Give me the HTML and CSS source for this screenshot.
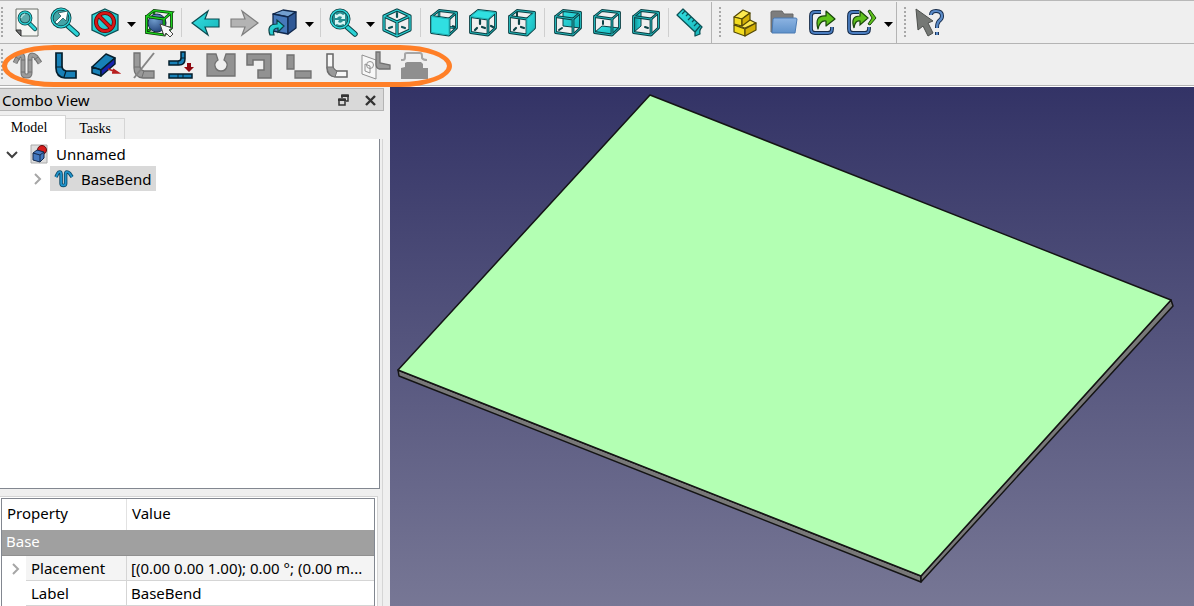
FILE: index.html
```html
<!DOCTYPE html>
<html lang="en">
<head>
    <meta charset="UTF-8">
    <meta name="viewport" content="width=device-width, initial-scale=1.0">
    <title>BaseBend</title>
    <link rel="stylesheet" href="styles.css">
</head>
<body>
    <!-- shared icon parts -->
    <svg class="defs" width="0" height="0" aria-hidden="true">
        <defs>
            <linearGradient id="cyan" x1="0" y1="0" x2="1" y2="1">
                <stop offset="0" stop-color="#34e0e2"/><stop offset="1" stop-color="#16b5ba"/>
            </linearGradient>
            <linearGradient id="shade" x1="0" y1="0" x2="1" y2="0">
                <stop offset="0" stop-color="#06898c"/><stop offset="1" stop-color="#2bd8dc"/>
            </linearGradient>
            <linearGradient id="folder" x1="0" y1="0" x2="0" y2="1">
                <stop offset="0" stop-color="#8db4e2"/><stop offset="1" stop-color="#5f92cb"/>
            </linearGradient>
            <radialGradient id="ball" cx=".35" cy=".3" r=".8">
                <stop offset="0" stop-color="#729fcf"/><stop offset="1" stop-color="#1d3c73"/>
            </radialGradient>
            <path id="front-edges" d="M4.500 10.500 22 13V29L4.500 26.500Z"/>
            <path id="top-edges" d="M4.500 10.500 12 4.500 29.500 6.500 22 13"/>
            <path id="right-edges" d="M29.500 6.500V22L22 29"/>
            <path id="back-edges" d="M12 4.500V20M12 20 4.500 26.500M12 20 29.500 22"/>
            <g id="cube-wire" stroke-linejoin="round">
                <g stroke="#0a4145" stroke-width="2.800"><use href="#front-edges"/><use href="#top-edges"/><use href="#right-edges"/></g>
                <g stroke="#22b4b7" stroke-width="1"><use href="#front-edges"/><use href="#top-edges"/><use href="#right-edges"/></g>
            </g>
            <g id="cube-back">
                <use href="#back-edges" stroke="#0a4145" stroke-width="2.600"/>
                <use href="#back-edges" stroke="#22b4b7" stroke-width="1"/>
            </g>
            <g id="axis-marks" stroke="#0a4145" stroke-width="2.200" stroke-linecap="round">
                <path d="M14 14V18M9 24 11 22M16 21 19 22M25 20 27 21"/>
            </g>
            <path id="hooks" d="M5 15 8 9Q9 7 11 7Q13 7 13 11V25Q13 28 16.500 28Q20 28 20 25V11Q20 7 22 7Q24 7 26 9L30 15"/>
            <path id="drop" d="M0 0H9L4.500 5Z"/>
            <path id="iso" d="M16 4 29 10V24L16 30 3 24V10ZM3 10 16 16 29 10M16 16V30"/>
            <path id="link-box" d="M15 6H9Q5 6 5 10V23Q5 27 9 27H22Q26 27 26 23V21"/>
            <path id="sub-box" d="M14 6H8Q4 6 4 10V23Q4 27 8 27H20Q24 27 24 23V21"/>
            <path id="query" d="M18 9Q18 5 23 5Q29 5 29 10Q29 13 26 15Q24 17 24 22M24 26V29"/>
        </defs>
    </svg>

    <header class="toolbars">
        <div class="toolbar-row">
            <div class="toolbar first" role="toolbar" aria-label="View">
                <span class="handle"></span>
                <button aria-label="Fit all">
                    <svg viewBox="0 0 33 33"><path d="M6 3H28V30H11L6 25Z" fill="#f4f5f2" stroke="#6d706b"/><path d="M6 24H11V30Z" fill="#77797a" stroke="#333"/><path d="M19 17 25 23" stroke="#0a4145" stroke-width="4.500" stroke-linecap="round"/><path d="M19 17 25 23" stroke="#2bd3d6" stroke-width="2.800" stroke-linecap="round"/><circle cx="15" cy="12" r="6" fill="#5cabac" stroke="#0a4145" stroke-width="2.800"/><circle cx="15" cy="12" r="6" stroke="#2bd3d6" stroke-width="1.300"/><path d="M11 12Q12 9 15 8" stroke="#a9dcdc" stroke-width="1.500"/></svg>
                </button>
                <button aria-label="Fit selection">
                    <svg viewBox="0 0 33 33"><path d="M19 20 28 28" stroke="#0a4145" stroke-width="5.500" stroke-linecap="round"/><path d="M19 20 28 28" stroke="#2bd3d6" stroke-width="3.500" stroke-linecap="round"/><circle cx="12" cy="12" r="9" fill="#43a4a6" stroke="#0a4145" stroke-width="3"/><circle cx="12" cy="12" r="9" stroke="#2bd3d6" stroke-width="1.400"/><path d="M6 16 12 10 9 7 19 5 17 15 14 12 8 18Z" fill="#fff" stroke="#174b50" stroke-width=".7"/></svg>
                </button>
                <button aria-label="Draw style">
                    <svg viewBox="0 0 33 33"><path d="M17 3 30 9V24L17 30 4 24V9Z" fill="url(#cyan)" stroke="#0a5256" stroke-width="1.300"/><circle cx="17" cy="16" r="9" stroke="#5c0909" stroke-width="4"/><path d="M11 10 23 22" stroke="#5c0909" stroke-width="4"/><circle cx="17" cy="16" r="9" stroke="#d91616" stroke-width="2.500"/><path d="M11 10 23 22" stroke="#d91616" stroke-width="2.500"/></svg>
                </button>
                <button class="menu" aria-label="Draw style menu"><svg viewBox="0 0 9 5"><use href="#drop"/></svg></button>
                <button aria-label="Bounding box">
                    <svg viewBox="0 0 33 33"><use href="#back-edges" stroke="#073907" stroke-width="2.600"/><use href="#back-edges" stroke="#13b413" stroke-width="1.200"/><circle cx="15" cy="17" r="9" fill="url(#ball)" stroke="#152b50"/><g stroke="#073907" stroke-width="2.800"><use href="#front-edges"/><use href="#top-edges"/><use href="#right-edges"/></g><g stroke="#1ed31e" stroke-width="1.300"><use href="#front-edges"/><use href="#top-edges"/><use href="#right-edges"/></g><path d="M18 18 30 22 27 24 31 28 28 31 24 27 22 30Z" fill="#f7f7f7" stroke="#444"/></svg>
                </button>
                <span class="separator"></span>
                <button aria-label="Back">
                    <svg viewBox="0 0 33 33"><path d="M4 17 20 5 17 13H31V21H17L20 29Z" fill="url(#cyan)" stroke="#0a4b50" stroke-width="1.200"/></svg>
                </button>
                <button aria-label="Forward" disabled>
                    <svg viewBox="0 0 33 33"><path d="M31 17 15 5 18 13H4V21H18L15 29Z" fill="#b3b3b3" stroke="#7e7e7e" stroke-width="1.200"/></svg>
                </button>
                <button aria-label="Go to linked object">
                    <svg viewBox="0 0 33 33"><g stroke="#10284c" stroke-width="1.300" stroke-linejoin="round"><path d="M7 8 17 4 30 6 22 11Z" fill="#729fcf"/><path d="M7 8 22 11V28L7 25Z" fill="#4679bb"/><path d="M22 11 30 6V22L22 28Z" fill="#2f5896"/></g><path d="M4 29Q0 18 11 18V14L18 20 12 26V22Q6 22 8 29Z" fill="url(#cyan)" stroke="#0a4145" stroke-width="1.200"/></svg>
                </button>
                <button class="menu" aria-label="Link menu"><svg viewBox="0 0 9 5"><use href="#drop"/></svg></button>
                <span class="separator"></span>
                <button aria-label="Sync view">
                    <svg viewBox="0 0 33 33"><path d="M20 21 28 28" stroke="#0a4145" stroke-width="5.500" stroke-linecap="round"/><path d="M20 21 28 28" stroke="#2bd3d6" stroke-width="3.500" stroke-linecap="round"/><circle cx="13" cy="13" r="9" fill="#2a8f92" stroke="#0a4145" stroke-width="3"/><circle cx="13" cy="13" r="9" stroke="#2bd3d6" stroke-width="1.500"/><path d="M8 12V8L10 9Q13 6 16 9L18 8V13H14L15 11Q12 9 10 12ZM18 15V19L16 18Q13 20 10 18L8 19V14H12L11 16Q14 18 16 15Z" fill="#d8f5f4"/></svg>
                </button>
                <button class="menu" aria-label="Sync menu"><svg viewBox="0 0 9 5"><use href="#drop"/></svg></button>
                <button aria-label="Isometric">
                    <svg viewBox="0 0 33 33" stroke-linejoin="round"><use href="#iso" stroke="#0a4145" stroke-width="3.200"/><use href="#iso" stroke="#2bd3d6" stroke-width="1.300"/><path d="M16 7V11M8 22 11 21M21 21 24 22" stroke="#0a5256" stroke-width="2.200" stroke-linecap="round"/></svg>
                </button>
                <span class="separator"></span>
                <button aria-label="Front">
                    <svg viewBox="0 0 33 33"><use href="#cube-back"/><use href="#cube-wire"/><path d="M4.500 10.500 22 13V29L4.500 26.500Z" fill="#30dfe1" stroke="#22b4b7"/><path d="M25 20 28 21" stroke="#0a4145" stroke-width="2"/></svg>
                </button>
                <button aria-label="Top">
                    <svg viewBox="0 0 33 33"><use href="#axis-marks"/><use href="#cube-wire"/><path d="M4.500 10.500 12 4.500 29.500 6.500 22 13Z" fill="#30dfe1" stroke="#22b4b7"/></svg>
                </button>
                <button aria-label="Right">
                    <svg viewBox="0 0 33 33"><use href="#axis-marks"/><path d="M12 5V12" stroke="#0a4145" stroke-width="2"/><use href="#cube-wire"/><path d="M22 13 29.500 6.500V22L22 29Z" fill="url(#cyan)" stroke="#22b4b7"/></svg>
                </button>
                <span class="separator"></span>
                <button aria-label="Rear">
                    <svg viewBox="0 0 33 33"><path d="M12 4.500 29.500 6.500V22L12 20Z" fill="url(#cyan)" stroke="#0a4145"/><path d="M8 24 11 22" stroke="#0a4145" stroke-width="2" stroke-linecap="round"/><use href="#cube-wire"/></svg>
                </button>
                <button aria-label="Bottom">
                    <svg viewBox="0 0 33 33"><path d="M4.500 26.500 12 20 29.500 22 22 29Z" fill="url(#cyan)" stroke="#0a4145"/><path d="M13 15V18" stroke="#0a4145" stroke-width="2" stroke-linecap="round"/><use href="#cube-wire"/></svg>
                </button>
                <button aria-label="Left">
                    <svg viewBox="0 0 33 33"><path d="M4.500 10.500 12 4.500V20L4.500 26.500Z" fill="url(#shade)" stroke="#0a4145"/><path d="M16 21 19 22" stroke="#0a4145" stroke-width="2" stroke-linecap="round"/><use href="#cube-wire"/></svg>
                </button>
                <span class="separator"></span>
                <button aria-label="Measure distance">
                    <svg viewBox="0 0 33 33"><path d="M2 9 8 3 27 21Q24 24 25 28L20 30 20 26Z" fill="url(#cyan)" stroke="#0a5256" stroke-width="1.300" stroke-linejoin="round"/><path d="M10 5 7 8M13 8 11 10M16 11 13 14M19 14 17 16M22 17 19 20M25 20 20 26" stroke="#0a5256" stroke-width="1.200"/></svg>
                </button>
            </div>
            <div class="toolbar" role="toolbar" aria-label="Structure">
                <span class="handle"></span>
                <button aria-label="Create part">
                    <svg viewBox="0 0 33 33"><g stroke="#534806" stroke-width="1.200" stroke-linejoin="round"><path d="M6 19 20 13 28 17 17 22Z" fill="#fce94f"/><path d="M6 19 17 23V30L6 26Z" fill="#f2dc20"/><path d="M17 23 28 17V24L17 30Z" fill="#d3b008"/><path d="M6 11 15 4 22 7 14 13Z" fill="#fce94f"/><path d="M6 11 14 13V20L6 18Z" fill="#f2dc20"/><path d="M14 13 22 7V14L14 20Z" fill="#d3b008"/></g></svg>
                </button>
                <button aria-label="Create group">
                    <svg viewBox="0 0 33 33"><path d="M4 6Q4 5 6 5H15L17 8H26V26H4Z" fill="#7d7d7d" stroke="#696969"/><path d="M7 12H28Q30 12 30 13L28 27H5L6 13Z" fill="url(#folder)" stroke="#4a7ab3"/></svg>
                </button>
                <button aria-label="Make link">
                    <svg viewBox="0 0 33 33"><use href="#link-box" stroke="#142a49" stroke-width="3.800"/><use href="#link-box" stroke="#4a7dc0" stroke-width="1.800"/><path d="M12 23Q8 9 20 10V5L29 13 20 20V15Q14 14 12 23Z" fill="#5fc21c" stroke="#18470a" stroke-width="1.200" stroke-linejoin="round"/></svg>
                </button>
                <button aria-label="Make sub-link">
                    <svg viewBox="0 0 33 33"><use href="#sub-box" stroke="#142a49" stroke-width="3.800"/><use href="#sub-box" stroke="#4a7dc0" stroke-width="1.800"/><path d="M9 22Q5 10 15 10V5L23 12 15 19V15Q10 14 9 22Z" fill="#5fc21c" stroke="#18470a" stroke-width="1.200"/><path d="M23 5 25 4 31 12 25 19 23 18 27 12Z" fill="#5fc21c" stroke="#18470a"/></svg>
                </button>
                <button class="menu" aria-label="Link options"><svg viewBox="0 0 9 5"><use href="#drop"/></svg></button>
            </div>
            <div class="toolbar last" role="toolbar" aria-label="Help">
                <span class="handle"></span>
                <button aria-label="What's this?">
                    <svg viewBox="0 0 33 33"><path d="M3 3 20 15 15 17 20 27 15 30 10 20 5 24Z" fill="#757875" stroke="#4d504d"/><use href="#query" stroke="#142a49" stroke-width="4"/><use href="#query" stroke="#5c8cc9" stroke-width="2.200"/></svg>
                </button>
            </div>
        </div>

        <div class="toolbar-row sheet-row">
            <div class="toolbar first" role="toolbar" aria-label="Sheet metal">
                <span class="handle"></span>
                <button aria-label="Make base wall" disabled>
                    <svg viewBox="0 0 33 33"><use href="#hooks" stroke="#717171" stroke-width="5"/><use href="#hooks" stroke="#9b9b9b" stroke-width="3"/><path d="M6 9 10 12M11 12H15M18 12H22M11 24H15M18 24H22M24 12 28 9" stroke="#717171"/></svg>
                </button>
                <button aria-label="Make wall">
                    <svg viewBox="0 0 33 33"><path d="M7 5H13V18Q13 22 17 23H27V30H16Q7 29 7 20Z" fill="#1780b7" stroke="#041e2c" stroke-width="1.700"/><path d="M7 19H13M17 23 15 29" stroke="#041e2c" stroke-width="1.200"/></svg>
                </button>
                <button aria-label="Extend face">
                    <svg viewBox="0 0 33 33"><g stroke="#041e2c" stroke-width="1.500" stroke-linejoin="round"><path d="M4 19 18 6 27 10 13 22Z" fill="#1780b7"/><path d="M4 19 13 22V28L4 25Z" fill="#1780b7"/><path d="M13 22 27 10V16L13 28Z" fill="#1722ae"/></g><path d="M20 21 31 25M25 21 31 25 24 25" stroke="#b91f1f" stroke-width="1.500" fill="#b91f1f"/></svg>
                </button>
                <button aria-label="Fold wall" disabled>
                    <svg viewBox="0 0 33 33"><path d="M7 5H13V18Q13 22 17 23H27V30H16Q7 29 7 20Z" fill="#999" stroke="#717171" stroke-width="1.300"/><path d="M7 19H13M17 23 15 29" stroke="#717171"/><path d="M27 5 7 30" stroke="#858585" stroke-width="2"/></svg>
                </button>
                <button aria-label="Unfold">
                    <svg viewBox="0 0 33 33"><path d="M15 4H19V11Q19 17 13 17H3V13H12Q15 13 15 10ZM3 26H26V30H3Z" fill="#1780b7" stroke="#041e2c" stroke-width="1.500"/><path d="M12 13V17M15 10H19M12 26V30M17 26V30" stroke="#041e2c"/><path d="M21 15H25V19H28L23 24 18 19H21Z" fill="#8f0710"/></svg>
                </button>
                <button aria-label="Corner relief" disabled>
                    <svg viewBox="0 0 33 33"><path d="M2 6H11L13 12Q9 15 10 18Q11 23 16 23Q21 23 22 18Q23 15 19 12L21 6H30V28H2Z" fill="#929292" stroke="#717171" stroke-width="1.300"/></svg>
                </button>
                <button aria-label="Make relief" disabled>
                    <svg viewBox="0 0 33 33"><path d="M3 6H27V30H14V22H20V12H9V17H3Z" fill="#929292" stroke="#717171" stroke-width="1.500"/></svg>
                </button>
                <button aria-label="Make junction" disabled>
                    <svg viewBox="0 0 33 33"><path d="M4 7H11V21H4ZM12 23H28V30H12Z" fill="#929292" stroke="#717171" stroke-width="1.300"/></svg>
                </button>
                <button aria-label="Make bend" disabled>
                    <svg viewBox="0 0 33 33"><path d="M5 6H11V18Q11 22 15 23H25V29H14Q5 28 5 20Z" fill="#f7f7f7" stroke="#666" stroke-width="1.500"/><path d="M5 19H11Q12 22 15 23L13 29Q6 28 5 19Z" fill="#999" stroke="#717171"/></svg>
                </button>
                <button aria-label="Sketch on sheet" disabled>
                    <svg viewBox="0 0 33 33"><path d="M1 7 15 12V31L1 26Z" fill="#f8f8f8" stroke="#909090"/><path d="M4 16 9 18V25L4 23Z" stroke="#929292"/><circle cx="9" cy="17" r="3.500" stroke="#929292"/><path d="M15 4H19V15L29 17V21H18Q15 20 15 16Z" fill="#999" stroke="#717171" stroke-width="1.300"/></svg>
                </button>
                <button aria-label="Forming" disabled>
                    <svg viewBox="0 0 33 33"><path d="M1 12H3Q5 12 5 9V6Q5 5 7 5H20Q22 5 22 8V10Q23 12 27 12" stroke="#a6a6a6" stroke-width="2"/><path d="M1 31V20L5 19V15L7 14H21L23 16V20H28V31Z" fill="#8f8f8f"/></svg>
                </button>
            </div>
            <span class="highlight"></span>
        </div>
    </header>

    <main class="workspace">
        <aside class="combo">
            <div class="dock-title">
                <h1>Combo View</h1>
                <button aria-label="Float"><svg viewBox="0 0 11 12"><path d="M4 4V1H10V7H8M1 5H7V11H1Z" stroke="#333" stroke-width="1.500"/><path d="M3 2H11M0 6H8" stroke="#333" stroke-width="2"/></svg></button>
                <button aria-label="Close"><svg viewBox="0 0 11 12"><path d="M1 2 10 11M10 2 1 11" stroke="#333" stroke-width="2.400"/></svg></button>
            </div>
            <div class="tabs" role="tablist">
                <button class="tab active" role="tab" aria-selected="true">Model</button>
                <button class="tab" role="tab" aria-selected="false">Tasks</button>
            </div>
            <div class="pane">
                <ul class="tree">
                    <li>
                        <div class="node">
                            <svg class="chevron open" viewBox="0 0 12 12"><path d="M1 4 6 9 11 4"/></svg>
                            <svg class="doc-icon" viewBox="0 0 18 20"><path d="M1 1H17V19H1Z" fill="#dedede" stroke="#aaa"/><circle cx="12" cy="6" r="4.500" fill="#d61c1c" stroke="#641010"/><path d="M3 9 7 6 14 8V14L10 18 3 16Z" fill="#4479c0" stroke="#13284b"/><path d="M3 9 10 11 14 8M10 11V18" stroke="#13284b"/></svg>
                            <span class="name doc-name">Unnamed</span>
                        </div>
                        <ul>
                            <li>
                                <div class="node child">
                                    <svg class="chevron" viewBox="0 0 12 12"><path d="M4 1 9 6 4 11"/></svg>
                                    <span class="name selected">
                                        <svg viewBox="2 3 31 30"><use href="#hooks" stroke="#0b4866" stroke-width="5.500"/><use href="#hooks" stroke="#2094cc" stroke-width="2.800"/></svg>
                                        BaseBend
                                    </span>
                                </div>
                            </li>
                        </ul>
                    </li>
                </ul>
                <div class="properties">
                    <table>
                        <colgroup>
                            <col class="col-expander">
                            <col class="col-key">
                            <col>
                        </colgroup>
                        <thead>
                            <tr><th class="key" colspan="2">Property</th><th>Value</th></tr>
                        </thead>
                        <tbody>
                            <tr class="group"><th colspan="3">Base</th></tr>
                            <tr class="shaded">
                                <td class="expander"><svg class="chevron" viewBox="0 0 12 12"><path d="M4 1 9 6 4 11"/></svg></td>
                                <td class="key">Placement</td>
                                <td class="value">[(0.00 0.00 1.00); 0.00 °; (0.00 m...</td>
                            </tr>
                            <tr>
                                <td class="expander"></td>
                                <td class="key">Label</td>
                                <td class="value">BaseBend</td>
                            </tr>
                        </tbody>
                    </table>
                </div>
            </div>
        </aside>
        <section class="view" aria-label="3D view">
            <svg viewBox="0 0 804 519" preserveAspectRatio="xMinYMin meet">
                <g stroke="#141414" stroke-width="1.500" stroke-linejoin="round">
                    <path d="M8 283 531 489V495L9 289Z" fill="#787878"/>
                    <path d="M531 489 781 213 783 219 531 495Z" fill="#787878"/>
                    <path d="M260 8 781 213 531 489 8 283Z" fill="#b3ffb3"/>
                </g>
            </svg>
        </section>
    </main>
</body>
</html>
```
FILE: styles.css
```css
* {
    box-sizing: border-box;
}
body {
    margin: 0;
    height: 100vh;
    display: flex;
    flex-direction: column;
    overflow: hidden;
    background: #efefef;
    color: #000;
    font-family: "Noto Sans", "Open Sans", sans-serif;
    font-size: 15px;
}
button {
    display: flex;
    align-items: center;
    justify-content: center;
    flex: none;
    padding: 0;
    border: none;
    background: none;
    color: inherit;
    font: inherit;
}
svg {
    display: block;
    fill: none;
}
.defs {
    position: absolute;
}
ul {
    list-style: none;
    margin: 0;
    padding: 0;
}

/* toolbars */
.toolbars {
    border-top: 1px solid #b8b8b8;
    border-bottom: 1px solid #fff;
}
.toolbar-row {
    display: flex;
    height: 43px;
    padding-top: 1px;
    border-bottom: 1px solid #b4b4b4;
}
.sheet-row {
    position: relative;
    height: 42px;
    padding-top: 0;
}
.toolbar {
    display: flex;
    padding-left: 5px;
    border-right: 1px solid #b4b4b4;
    margin-right: 1px;
}
.toolbar.first {
    padding-left: 0;
}
.toolbar.last,
.sheet-row .toolbar {
    border-right: none;
}
.toolbar button {
    width: 39px;
}
.toolbar button svg {
    width: 33px;
    height: 33px;
}
.toolbar .menu {
    width: 15px;
}
.toolbar .menu svg {
    width: 9px;
    height: 5px;
    fill: #000;
    margin-top: 3px;
}
.handle {
    width: 7px;
    margin: 4px 0;
    background: radial-gradient(circle at 2px 2px, #a8a8a8 1px, transparent 1px) 0 0 / 7px 4px;
}
.separator {
    width: 7px;
    margin: 6px 0;
    background: linear-gradient(#cfcfcf, #cfcfcf) 3px 0 / 1px 100% no-repeat;
}
.highlight {
    position: absolute;
    top: 1px;
    left: 2px;
    width: 450px;
    height: 42px;
    border: 5px solid #ff7f27;
    border-radius: 52px / 21px;
    pointer-events: none;
    z-index: 1;
}

/* combo view */
.workspace {
    flex: 1;
    min-height: 0;
    display: grid;
    grid-template-columns: 390px 1fr;
}
.combo {
    display: flex;
    flex-direction: column;
    min-height: 0;
    padding: 1px 6px 0 0;
}
.dock-title {
    display: flex;
    align-items: center;
    height: 23px;
    padding: 0 6px 0 2px;
    border: 1px solid #b4b4b4;
    border-left: none;
    background: #d9d9d9;
}
.dock-title h1 {
    flex: 1;
    margin: 0;
    font-size: 15px;
    font-weight: normal;
}
.dock-title button {
    width: 14px;
    margin-left: 13px;
}
.dock-title svg {
    width: 11px;
    height: 12px;
}
.tabs {
    display: flex;
    align-items: flex-end;
    margin-top: 4px;
    height: 24px;
    font-family: "Liberation Serif", serif;
    font-size: 14px;
}
.tab {
    width: 59px;
    height: 21px;
    border: 1px solid #d5d5d5;
    border-left: none;
    border-bottom: none;
}
.tab.active {
    width: 66px;
    height: 24px;
    padding-right: 7px;
    background: #fff;
}
.pane {
    flex: 1;
    min-height: 0;
    display: flex;
    flex-direction: column;
    margin-right: 1px;
    border-right: 1px solid #d5d5d5;
}
.tree {
    flex: 1;
    margin-right: 2px;
    padding-top: 2px;
    background: #fff;
    border-right: 1px solid #828790;
    border-bottom: 1px solid #828790;
}
.node {
    display: flex;
    align-items: center;
    height: 25px;
    padding-left: 6px;
}
.node.child {
    padding-left: 31px;
}
.chevron {
    width: 12px;
    height: 12px;
    stroke: #a6a6a6;
    stroke-width: 2;
}
.chevron.open {
    stroke: #404040;
}
.doc-icon {
    width: 18px;
    height: 20px;
    margin-left: 12px;
}
.name {
    display: flex;
    align-items: center;
    height: 25px;
}
.doc-name {
    margin-left: 8px;
}
.selected {
    gap: 7px;
    margin-left: 7px;
    padding: 0 4px;
    background: #d9d9d9;
}
.selected svg {
    width: 20px;
    height: 20px;
}

/* property editor */
.properties {
    margin: 7px 4px 0 0;
    padding: 1px 2px 0 1px;
    background: #fff;
    border-top: 1px solid #d5d5d5;
    border-right: 1px solid #d5d5d5;
}
table {
    width: 100%;
    border: 1px solid #828790;
    border-bottom: none;
    border-collapse: separate;
    border-spacing: 0;
    table-layout: fixed;
}
.col-expander {
    width: 24px;
}
.col-key {
    width: 101px;
}
th,
td {
    height: 25px;
    padding: 0 0 0 5px;
    border-bottom: 1px solid #d5d5d5;
    font-weight: normal;
    text-align: left;
    white-space: nowrap;
    line-height: 20px;
}
th {
    padding-bottom: 3px;
}
thead th {
    height: 31px;
    border-bottom: none;
}
th.key {
    border-right: 1px solid #e2e2e2;
}
td.key {
    border-right: 1px solid #d5d5d5;
}
td.value {
    padding-left: 4px;
}
.group th {
    height: 26px;
    padding-left: 4px;
    background: #a0a0a0;
    border-bottom-color: #909090;
    color: #fff;
}
.shaded td {
    background: #f4f4f4;
}
td.expander {
    padding-left: 7px;
    background: #fff;
    border-bottom: none;
}

/* 3d view */
.view {
    min-width: 0;
    overflow: hidden;
    background: linear-gradient(#333366, #777795);
}
.view svg {
    width: 100%;
}
```
